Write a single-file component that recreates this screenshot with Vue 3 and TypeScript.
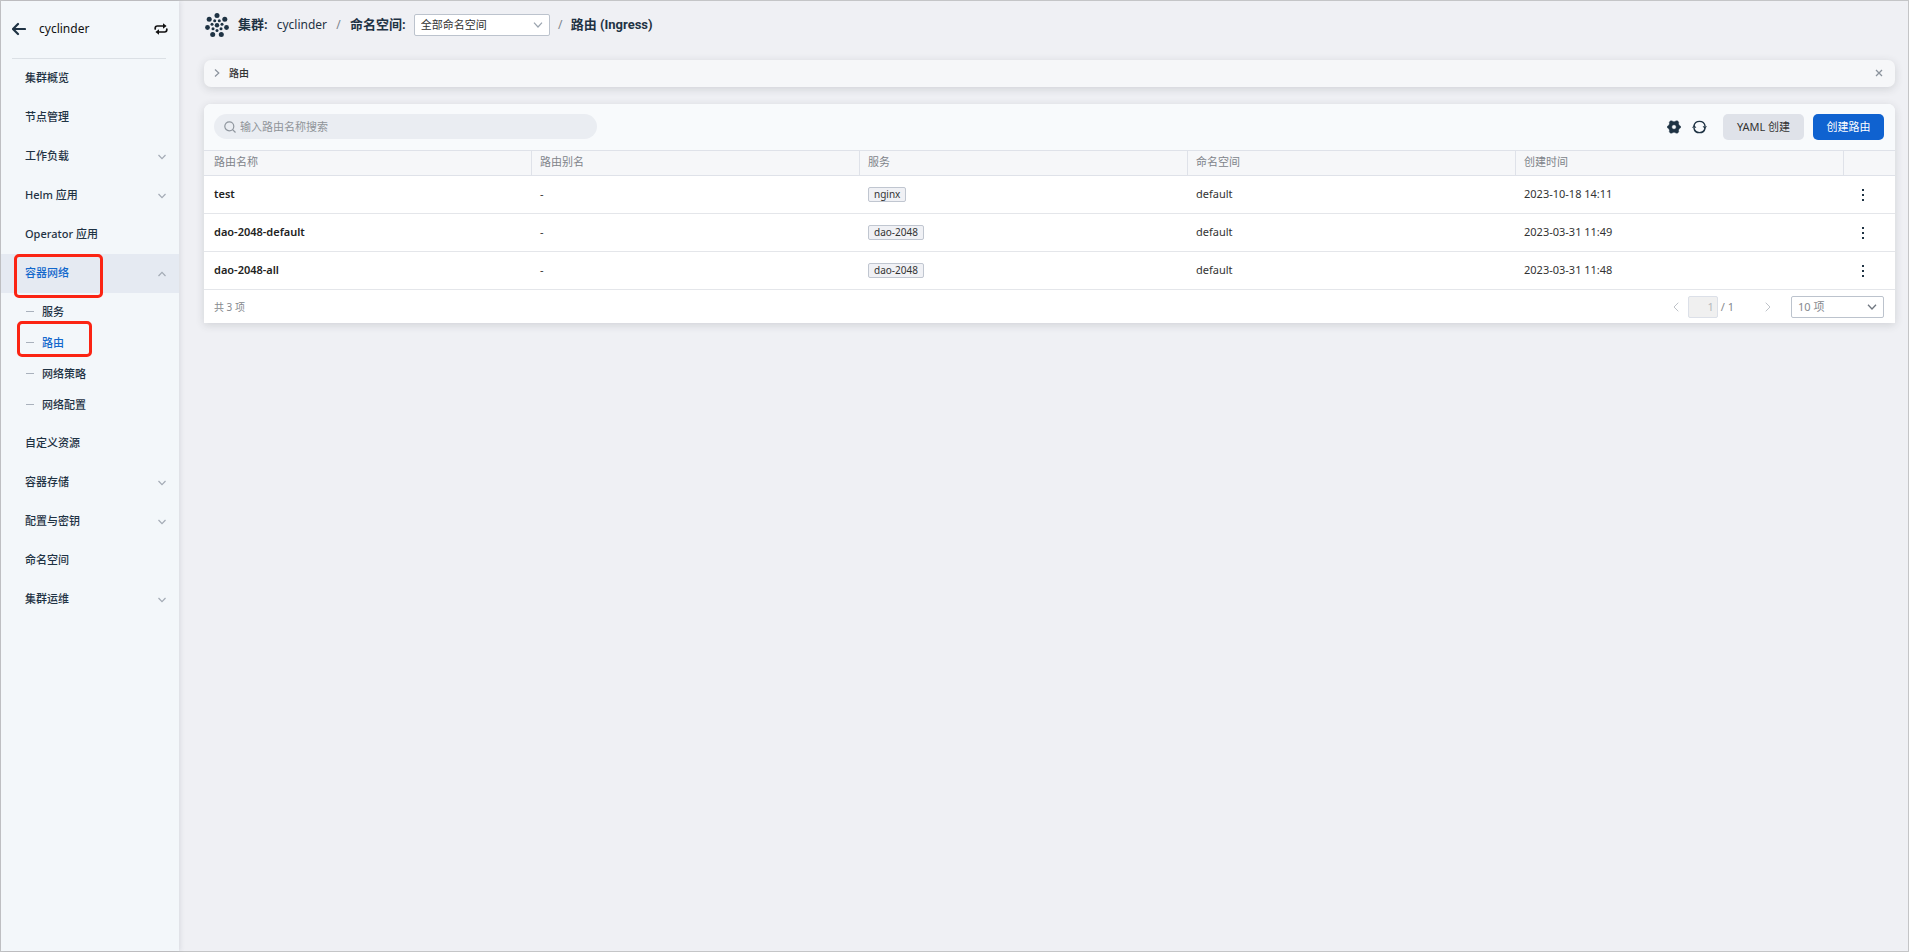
<script setup lang="ts">
import { ref } from 'vue'

interface NavItem {
  label: string
  expandable?: boolean
  active?: boolean
  children?: { label: string; active?: boolean }[]
}

const navItems: NavItem[] = [
  { label: '集群概览' },
  { label: '节点管理' },
  { label: '工作负载', expandable: true },
  { label: 'Helm 应用', expandable: true },
  { label: 'Operator 应用' },
  {
    label: '容器网络',
    expandable: true,
    active: true,
    children: [
      { label: '服务' },
      { label: '路由', active: true },
      { label: '网络策略' },
      { label: '网络配置' },
    ],
  },
  { label: '自定义资源' },
  { label: '容器存储', expandable: true },
  { label: '配置与密钥', expandable: true },
  { label: '命名空间' },
  { label: '集群运维', expandable: true },
]

const columns: string[] = ['路由名称', '路由别名', '服务', '命名空间', '创建时间']

interface Route {
  name: string
  alias: string
  service: string
  namespace: string
  created: string
}

const routes: Route[] = [
  { name: 'test', alias: '-', service: 'nginx', namespace: 'default', created: '2023-10-18 14:11' },
  { name: 'dao-2048-default', alias: '-', service: 'dao-2048', namespace: 'default', created: '2023-03-31 11:49' },
  { name: 'dao-2048-all', alias: '-', service: 'dao-2048', namespace: 'default', created: '2023-03-31 11:48' },
]

const keyword = ref('')
const namespace = ref('all')
const pageSize = ref('10')
</script>

<template>
  <div class="app">
    <aside class="sidebar">
      <div class="side-head">
        <button class="icon-btn" type="button" aria-label="返回">
          <svg width="14" height="14" viewBox="1 0 14 14" fill="none" stroke="#1f3344" stroke-width="2.200" stroke-linecap="round" stroke-linejoin="round">
            <path d="M14 7H2.500M7 2 2 7l5 5" />
          </svg>
        </button>
        <span class="cluster">cyclinder</span>
        <button class="icon-btn" type="button" aria-label="切换集群">
          <svg width="14" height="12" viewBox="0 0 14 12">
            <path d="M1.200 6V5.200C1.200 3.800 2 3 3.400 3H10M12.800 6v.8C12.800 8.200 12 9 10.600 9H4" fill="none" stroke="#111" stroke-width="1.700" stroke-linecap="round" />
            <path d="M9 .2 12.600 3 9 5.800ZM5 6.200 1.400 9 5 11.800Z" fill="#111" />
          </svg>
        </button>
      </div>
      <nav class="nav" aria-label="集群导航">
        <div v-for="item in navItems" :key="item.label">
          <a href="#" class="nav-item" :class="{ active: item.active }">
            <span class="nav-label">{{ item.label }}</span>
            <svg v-if="item.expandable" class="chev" width="8" height="6" viewBox="0 0 8 6" fill="none" stroke="#a3abb5" stroke-width="1.200">
              <path :d="item.active ? 'M.5 5 4 1.300 7.500 5' : 'M.5 1 4 4.700 7.500 1'" />
            </svg>
            <i v-if="item.active" class="mark mark-group"></i>
          </a>
          <div v-if="item.children" class="sub">
            <a v-for="child in item.children" :key="child.label" href="#" class="sub-item" :class="{ active: child.active }">
              <i class="dash"></i>
              <span>{{ child.label }}</span>
              <i v-if="child.active" class="mark mark-leaf"></i>
            </a>
          </div>
        </div>
      </nav>
    </aside>

    <main class="main">
      <header class="crumbs">
        <svg class="logo" width="24" height="24" viewBox="0 0 24 24" fill="#1f3344">
          <circle cx="12" cy="2.500" r="2.500" />
          <circle cx="4.200" cy="6.200" r="2.500" />
          <circle cx="19.800" cy="6.200" r="2.500" />
          <circle cx="2.500" cy="14.500" r="2.400" />
          <circle cx="21.500" cy="14.500" r="2.400" />
          <circle cx="7.700" cy="21.400" r="2.500" />
          <circle cx="16.300" cy="21.400" r="2.500" />
          <circle cx="12" cy="12.300" r="2.200" />
          <circle cx="9.700" cy="7.800" r="1.500" />
          <circle cx="14.300" cy="7.800" r="1.500" />
          <circle cx="7" cy="11.200" r="1.500" />
          <circle cx="17" cy="11.200" r="1.500" />
          <circle cx="8" cy="15.800" r="1.500" />
          <circle cx="16" cy="15.800" r="1.500" />
          <circle cx="12" cy="17.600" r="1.500" />
        </svg>
        <strong>集群:</strong>
        <a href="#" class="crumb-link">cyclinder</a>
        <span class="slash">/</span>
        <label for="ns" class="ns-label">命名空间:</label>
        <span class="select ns">
          <select id="ns" v-model="namespace">
            <option value="all">全部命名空间</option>
          </select>
          <svg width="10" height="6" viewBox="0 0 10 6" fill="none" stroke="#9aa3ae" stroke-width="1.200"><path d="M1 .7 5 5 9 .7" /></svg>
        </span>
        <span class="slash">/</span>
        <strong>路由 (Ingress)</strong>
      </header>

      <section class="card tip">
        <button class="tip-toggle" type="button">
          <svg width="6" height="8" viewBox="0 0 6 8" fill="none" stroke="#8b939d" stroke-width="1.200"><path d="M1 .5 4.800 4 1 7.500" /></svg>
          <span>路由</span>
        </button>
        <button class="icon-btn" type="button" aria-label="关闭">
          <svg width="8" height="8" viewBox="0 0 8 8" stroke="#8b939d" stroke-width="1.300"><path d="M1 1l6 6M7 1 1 7" /></svg>
        </button>
      </section>

      <section class="card panel">
        <div class="toolbar">
          <label class="search">
            <svg width="12" height="12" viewBox="0 0 12 12" fill="none" stroke="#8f969e" stroke-width="1.200"><circle cx="5.300" cy="5.300" r="4.500" /><path d="M8.600 8.600 11.500 11.500" /></svg>
            <input v-model="keyword" type="text" placeholder="输入路由名称搜索" aria-label="搜索路由" />
          </label>
          <div class="tools">
            <button class="icon-btn" type="button" aria-label="设置">
              <svg width="14" height="14" viewBox="0 0 14 14" fill="#1f3344" stroke="#1f3344" stroke-width=".6" stroke-linejoin="round" fill-rule="evenodd">
                <path d="M3.300.9h2l.6.900h2.200l.6-.9h2l1 1.700-.3 1.200.9 1.800 1.200.6v1.600l-1.200.6-.9 1.800.3 1.200-1 1.700h-2l-.6-.9H5.900l-.6.900h-2l-1-1.700.3-1.200-.9-1.800-1.200-.6V6.200l1.200-.6.9-1.800-.3-1.200ZM7 4.700a2.300 2.300 0 1 0 0 4.600 2.300 2.300 0 0 0 0-4.600Z" />
              </svg>
            </button>
            <button class="icon-btn" type="button" aria-label="刷新">
              <svg width="15" height="14" viewBox="0 0 15 14">
                <path d="M1.900 6A5.700 5.700 0 0 1 13.100 6M13.100 8A5.700 5.700 0 0 1 1.900 8" fill="none" stroke="#1f3344" stroke-width="1.400" />
                <path d="M10.600 6.200h4.400l-2.200 2.700ZM0 7.800h4.400L2.200 5.100Z" fill="#1f3344" />
              </svg>
            </button>
            <button class="btn" type="button">YAML 创建</button>
            <button class="btn primary" type="button">创建路由</button>
          </div>
        </div>

        <table class="table">
          <thead>
            <tr>
              <th v-for="c in columns" :key="c" scope="col">{{ c }}</th>
              <th class="ops" scope="col" aria-label="操作"></th>
            </tr>
          </thead>
          <tbody>
            <tr v-for="r in routes" :key="r.name">
              <td class="name">{{ r.name }}</td>
              <td>{{ r.alias }}</td>
              <td><span class="tag">{{ r.service }}</span></td>
              <td>{{ r.namespace }}</td>
              <td>{{ r.created }}</td>
              <td class="ops">
                <button class="icon-btn" type="button" aria-label="更多操作">
                  <svg width="12" height="14" viewBox="0 0 12 14" fill="#1f3344">
                    <rect x="5" y="1" width="2" height="2" /><rect x="5" y="6" width="2" height="2" /><rect x="5" y="11" width="2" height="2" />
                  </svg>
                </button>
              </td>
            </tr>
          </tbody>
        </table>

        <footer class="pager">
          <span class="total">共 3 项</span>
          <button class="icon-btn" type="button" disabled aria-label="上一页">
            <svg width="6" height="10" viewBox="0 0 6 10" fill="none" stroke="#bfc3c9"><path d="M5.300.7 1 5l4.300 4.300" /></svg>
          </button>
          <input class="page" type="text" value="1" disabled aria-label="页码" />
          <span class="pages">/ 1</span>
          <button class="icon-btn next" type="button" disabled aria-label="下一页">
            <svg width="6" height="10" viewBox="0 0 6 10" fill="none" stroke="#bfc3c9"><path d="M.7.7 5 5 .7 9.300" /></svg>
          </button>
          <span class="select size">
            <select v-model="pageSize" aria-label="每页条数">
              <option value="10">10 项</option>
            </select>
            <svg width="10" height="6" viewBox="0 0 10 6" fill="none" stroke="#707780" stroke-width="1.300"><path d="M1 .7 5 5 9 .7" /></svg>
          </span>
        </footer>
      </section>
    </main>
  </div>
</template>

<style>
body {
  background: #eff0f4;
}
</style>

<style scoped>
.app,
.app * {
  box-sizing: border-box;
}
.app {
  display: flex;
  min-height: 100vh;
  border: 1px solid #c4c5c7;
  background: #eff0f4;
  color: #333;
  font: 11px/16px "Noto Sans", "Noto Sans CJK SC", sans-serif;
}
button,
input,
select {
  font: inherit;
  color: inherit;
}
a {
  color: inherit;
  text-decoration: none;
}
.icon-btn {
  display: inline-flex;
  padding: 0;
  border: 0;
  background: none;
}

.sidebar {
  flex: none;
  width: 178px;
  background: #f3f7fa;
  box-shadow: 1px 0 5px rgba(40, 50, 70, 0.12);
  color: #1f3344;
}
.side-head {
  display: flex;
  align-items: center;
  height: 58px;
  margin: 0 13px 0 11px;
  padding-bottom: 2px;
  border-bottom: 1px solid #dbe0e5;
}
.cluster {
  flex: 1;
  padding-left: 13px;
  color: #111;
  font-size: 12px;
}
.side-head .icon-btn:last-child {
  margin-right: -2px;
}
.nav {
  font-weight: 500;
}
.nav-item {
  position: relative;
  display: flex;
  align-items: center;
  justify-content: space-between;
  height: 39px;
  padding: 0 13px 0 24px;
}
.nav-label {
  padding-bottom: 2px;
}
.nav-item.active {
  background: #e5eaf2;
  color: #1268cc;
}
.sub {
  padding: 3px 0 4px;
}
.sub-item {
  position: relative;
  display: flex;
  align-items: center;
  gap: 8px;
  height: 31px;
  padding-left: 25px;
}
.sub-item.active {
  color: #1268cc;
}
.dash {
  width: 8px;
  height: 1px;
  background: #a9b1bc;
}
.mark {
  position: absolute;
  z-index: 1;
  border: 3px solid #fb2413;
  border-radius: 5px;
}
.mark-group {
  top: 0;
  left: 13px;
  width: 89px;
  height: 44px;
}
.mark-leaf {
  top: -6px;
  left: 16px;
  width: 75px;
  height: 36px;
}

.main {
  flex: 1;
  min-width: 0;
  padding: 8px 13px 24px 25px;
}
.crumbs {
  display: flex;
  align-items: center;
  height: 32px;
  margin-bottom: 19px;
  color: #1f3344;
  font-size: 12px;
}
.crumbs strong,
.ns-label {
  font-family: Roboto, "Noto Sans CJK SC", sans-serif;
  font-size: 13px;
  font-weight: 700;
}
.logo {
  margin: 0 9px 0 1px;
}
.crumb-link {
  margin-left: 9px;
}
.slash {
  width: 23px;
  color: #7d858e;
  text-align: center;
}
.select {
  position: relative;
  display: inline-flex;
  align-items: center;
}
.select select {
  width: 100%;
  height: 22px;
  padding: 0 24px 0 6px;
  border: 1px solid #bcc3cd;
  border-radius: 2px;
  background: #fff;
  appearance: none;
  font-size: 11px;
}
.select svg {
  position: absolute;
  right: 7px;
  pointer-events: none;
}
.ns {
  width: 136px;
  margin-left: 8px;
  color: #333;
}
.ns + .slash {
  width: 21px;
}

.card {
  background: #f6f7f9;
  border-radius: 7px;
  box-shadow: 0 2px 8px rgba(50, 55, 65, 0.16);
}
.tip {
  display: flex;
  align-items: center;
  justify-content: space-between;
  height: 27px;
  padding: 0 12px 2px 10px;
  margin-bottom: 17px;
}
.tip-toggle {
  display: flex;
  align-items: center;
  gap: 9px;
  padding: 0;
  border: 0;
  background: none;
  font-size: 10px;
  font-weight: 500;
}
.panel {
  border-radius: 7px 7px 0 0;
  background: #fff;
}
.toolbar {
  display: flex;
  align-items: center;
  justify-content: space-between;
  height: 46px;
  padding: 0 11px 0 10px;
  border-radius: 7px 7px 0 0;
  background: #f8fafc;
}
.search {
  display: flex;
  align-items: center;
  gap: 4px;
  width: 383px;
  height: 25px;
  padding: 0 10px;
  margin-bottom: 1px;
  border-radius: 13px;
  background: #eaedf2;
}
.search input {
  flex: 1;
  min-width: 0;
  padding: 0;
  border: 0;
  outline: 0;
  background: none;
}
.search input::placeholder {
  color: #8f9499;
}
.tools {
  display: flex;
  align-items: center;
}
.tools .icon-btn {
  margin-right: 11px;
}
.tools .icon-btn + .icon-btn {
  margin-right: 16px;
}
.btn {
  height: 26px;
  min-width: 81px;
  padding: 0 12px 1px;
  border: 0;
  border-radius: 5px;
  background: #dfe2e9;
}
.btn.primary {
  min-width: 71px;
  margin-left: 9px;
  background: #0f62d0;
  color: #fff;
}

.table {
  width: 100%;
  table-layout: fixed;
  border-collapse: separate;
  border-spacing: 0;
  text-align: left;
}
th {
  height: 26px;
  padding: 0 8px 2px;
  border: solid #dfe2e9;
  border-width: 1px 1px 1px 0;
  background: #f6f7f9;
  color: #80848a;
  font-weight: 400;
}
th:last-child {
  border-right: 0;
}
td {
  height: 38px;
  padding: 0 8px 2px;
  border-bottom: 1px solid #e4e6ea;
}
th:first-child,
td:first-child {
  padding-left: 10px;
}
.name {
  color: #222;
  font-weight: 600;
}
.ops {
  width: 51px;
}
td.ops {
  padding: 0 0 0 13px;
}
td .icon-btn {
  display: flex;
}
.tag {
  display: inline-block;
  padding: 0 5px;
  border: 1px solid #c0c6d0;
  border-radius: 2px;
  background: #f0f1f5;
  font-size: 10px;
  line-height: 13px;
  vertical-align: middle;
}

.pager {
  display: flex;
  align-items: center;
  height: 33px;
  padding: 0 11px 0 10px;
  color: #85898e;
}
.total {
  flex: 1;
  font-size: 10px;
}
.page {
  width: 30px;
  height: 22px;
  margin: 0 3px 0 9px;
  padding: 0 3px;
  border: 1px solid #dce0e8;
  border-radius: 2px;
  background: #f0f0f0;
  color: #b5b8bc;
  text-align: right;
}
.next {
  margin: 0 20px 0 31px;
}
.size {
  width: 93px;
}
</style>
